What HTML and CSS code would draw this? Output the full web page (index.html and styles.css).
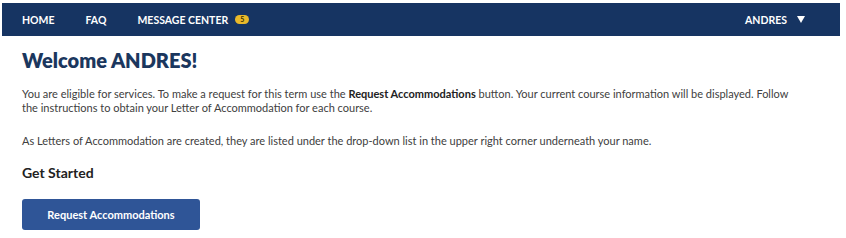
FILE: index.html
```html
<!DOCTYPE html>
<html lang="en">
<head>
<meta charset="utf-8">
<title>Welcome</title>
<link rel="stylesheet" href="styles.css">
</head>
<body>
<nav class="navbar">
  <ul class="nav-left">
    <li><a href="#">HOME</a></li>
    <li><a href="#">FAQ</a></li>
    <li><a href="#">MESSAGE CENTER <span class="badge">5</span></a></li>
  </ul>
  <div class="nav-user">
    <span>ANDRES</span>
    <svg class="caret" width="8" height="7" viewBox="0 0 8 7"><path d="M0 0H8L4 7Z" fill="#fff"/></svg>
  </div>
</nav>
<main class="content">
  <h1 class="title">Welcome ANDRES!</h1>
  <p class="text">You are eligible for services. To make a request for this term use the <strong>Request Accommodations</strong> button. Your current course information will be displayed. Follow the instructions to obtain your Letter of Accommodation for each course.</p>
  <p class="text text-gap">As Letters of Accommodation are created, they are listed under the drop-down list in the upper right corner underneath your name.</p>
  <h2 class="subtitle">Get Started</h2>
  <button class="btn" type="button">Request Accommodations</button>
</main>
</body>
</html>
```
FILE: styles.css
```css
html, body {
  background: #ffffff;
}
body {
  margin: 3px 6px 0 2px;
  font-family: Lato, "Open Sans", "Liberation Sans", sans-serif;
  color: #333333;
}
.navbar {
  display: flex;
  align-items: center;
  justify-content: space-between;
  height: 33px;
  background: #163462;
  padding: 0 35px 0 20px;
}
.nav-left {
  display: flex;
  gap: 31px;
  list-style: none;
  margin: 0;
  padding: 0;
}
.nav-left a, .nav-user {
  color: #ffffff;
  text-decoration: none;
  font-weight: 700;
  font-size: 10.5px;
  display: flex;
  align-items: center;
}
.badge {
  display: inline-block;
  margin-left: 7px;
  background: #e9b92a;
  color: #3a3000;
  font-size: 7px;
  line-height: 9px;
  height: 9px;
  padding: 0 5px;
  border-radius: 5px;
}
.nav-user .caret {
  margin-left: 10px;
}
.content {
  padding: 0 40px 0 20px;
}
.title {
  margin: 11px 0 0;
  font-size: 20px;
  line-height: 26px;
  font-weight: 800;
  color: #1b375e;
}
.text {
  margin: 14px 0 0;
  font-size: 11px;
  line-height: 14px;
  color: #404040;
}
.text-gap {
  margin-top: 19px;
}
.text strong {
  color: #222;
}
.subtitle {
  margin: 16px 0 0;
  font-size: 14px;
  line-height: 18px;
  font-weight: 700;
  color: #222222;
}
.btn {
  margin-top: 17px;
  width: 178px;
  height: 31px;
  background: #2f5597;
  color: #ffffff;
  border: 0;
  border-radius: 3px;
  font-family: inherit;
  font-size: 11px;
  font-weight: 700;
}
```
